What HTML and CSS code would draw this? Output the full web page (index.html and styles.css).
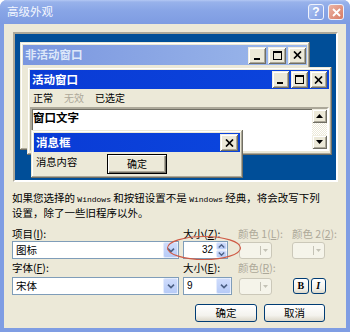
FILE: index.html
```html
<!DOCTYPE html>
<html lang="zh-CN">
<head>
<meta charset="utf-8">
<title>高级外观</title>
<link rel="stylesheet" href="styles.css">
</head>
<body>
<div class="dialog">
  <div class="titlebar">
    <span class="title">高级外观</span>
    <span class="cap help">?</span>
    <span class="cap close"><svg width="9" height="9" viewBox="0 0 9 9"><path d="M1 1L8 8M8 1L1 8" stroke="#fff" stroke-width="1.8"/></svg></span>
  </div>
  <div class="client">
    <div class="preview">
      <div class="win win-inactive">
        <div class="wtitle t-inactive">
          <span class="wname">非活动窗口</span>
          <span class="cb cb-lg"><svg width="9" height="9" viewBox="0 0 9 9"><rect x="1" y="7" width="6" height="2"/></svg></span>
          <span class="cb cb-lg"><svg width="9" height="9" viewBox="0 0 9 9"><path d="M0 0H9V9H0ZM1 2V8H8V2Z" fill-rule="evenodd"/></svg></span>
          <span class="cb cb-lg cb-close"><svg width="9" height="8" viewBox="0 0 9 8"><path d="M1 0.5L8 7.5M8 0.5L1 7.5" stroke="#000" stroke-width="1.7"/></svg></span>
        </div>
      </div>
      <div class="win win-active">
        <div class="wtitle t-active">
          <span class="wname">活动窗口</span>
          <span class="cb"><svg width="9" height="9" viewBox="0 0 9 9"><rect x="1" y="7" width="6" height="2"/></svg></span>
          <span class="cb"><svg width="9" height="9" viewBox="0 0 9 9"><path d="M0 0H9V9H0ZM1 2V8H8V2Z" fill-rule="evenodd"/></svg></span>
          <span class="cb cb-close"><svg width="9" height="8" viewBox="0 0 9 8"><path d="M1 0.5L8 7.5M8 0.5L1 7.5" stroke="#000" stroke-width="1.7"/></svg></span>
        </div>
        <div class="menu">
          <span>正常</span>
          <span class="dis">无效</span>
          <span>已选定</span>
        </div>
        <div class="textbox">
          <span class="wtext">窗口文字</span>
          <div class="vscroll">
            <span class="sb-btn"><svg width="7" height="4" viewBox="0 0 7 4"><path d="M3.5 0L7 4H0Z"/></svg></span>
            <span class="sb-track"></span>
            <span class="sb-btn"><svg width="7" height="4" viewBox="0 0 7 4"><path d="M0 0H7L3.5 4Z"/></svg></span>
          </div>
        </div>
      </div>
      <div class="win win-msg">
        <div class="wtitle t-active t-msg">
          <span class="wname">消息框</span>
          <span class="cb cb-lg"><svg width="9" height="8" viewBox="0 0 9 8"><path d="M1 0.5L8 7.5M8 0.5L1 7.5" stroke="#000" stroke-width="1.7"/></svg></span>
        </div>
        <div class="msgbody">
          <span class="msgtext">消息内容</span>
          <span class="okbtn">确定</span>
        </div>
      </div>
    </div>

    <p class="desc">如果您选择的 <span class="lat">Windows</span> 和按钮设置不是 <span class="lat">Windows</span> 经典，将会改写下列<br>设置，除了一些旧程序以外。</p>

    <div class="form">
      <span class="lbl">项目(<u>I</u>):</span>
      <span class="lbl">大小(<u>Z</u>):</span>
      <span class="lbl off">颜色 1(<u>L</u>):</span>
      <span class="lbl off">颜色 2(<u>2</u>):</span>

      <div class="combo combo-wide">
        <span class="val">图标</span>
        <span class="drop"><svg width="8" height="5" viewBox="0 0 8 5"><path d="M1 0.6L4 3.6L7 0.6" fill="none" stroke="#4d6185" stroke-width="1.6"/></svg></span>
      </div>
      <div class="spin">
        <span class="num">32</span>
        <span class="arrows">
          <span class="arr"><svg width="7" height="4" viewBox="0 0 7 4"><path d="M0.8 3.4L3.5 0.8L6.2 3.4" fill="none" stroke="#4d6185" stroke-width="1.4"/></svg></span>
          <span class="arr"><svg width="7" height="4" viewBox="0 0 7 4"><path d="M0.8 0.6L3.5 3.2L6.2 0.6" fill="none" stroke="#4d6185" stroke-width="1.4"/></svg></span>
        </span>
      </div>
      <div class="colorbtn"><span class="sep"></span><svg width="5" height="3" viewBox="0 0 5 3"><path d="M0 0H5L2.5 3Z" fill="#c4c2b6"/></svg></div>
      <div class="colorbtn colorbtn-2"><span class="sep"></span><svg width="5" height="3" viewBox="0 0 5 3"><path d="M0 0H5L2.5 3Z" fill="#c4c2b6"/></svg></div>

      <span class="lbl">字体(<u>F</u>):</span>
      <span class="lbl">大小(<u>E</u>):</span>
      <span class="lbl off">颜色(<u>R</u>):</span>
      <span></span>

      <div class="combo combo-wide">
        <span class="val">宋体</span>
        <span class="drop"><svg width="8" height="5" viewBox="0 0 8 5"><path d="M1 0.6L4 3.6L7 0.6" fill="none" stroke="#4d6185" stroke-width="1.6"/></svg></span>
      </div>
      <div class="combo combo-size">
        <span class="val num-l">9</span>
        <span class="drop"><svg width="8" height="5" viewBox="0 0 8 5"><path d="M1 0.6L4 3.6L7 0.6" fill="none" stroke="#4d6185" stroke-width="1.6"/></svg></span>
      </div>
      <div class="colorbtn colorbtn-r2"><span class="sep"></span><svg width="5" height="3" viewBox="0 0 5 3"><path d="M0 0H5L2.5 3Z" fill="#c4c2b6"/></svg></div>
      <div class="styles">
        <span class="sbtn bold">B</span>
        <span class="sbtn ital">I</span>
      </div>

      <svg class="ring" width="76" height="26" viewBox="0 0 76 26"><ellipse cx="38" cy="13" rx="36.5" ry="11.5" fill="none" stroke="#cf5a45" stroke-width="1.1"/></svg>
    </div>

    <div class="actions">
      <span class="btn">确定</span>
      <span class="btn btn-2">取消</span>
    </div>
  </div>
</div>
</body>
</html>
```

FILE: styles.css
```css
* { box-sizing: border-box; margin: 0; padding: 0; }
html, body { width: 350px; height: 332px; overflow: hidden; background: #fff; }
body { font-family: "Noto Sans CJK SC", "Noto Sans", sans-serif; font-size: 10.5px; color: #000; line-height: 1; }
u { text-decoration: underline; text-underline-offset: 1px; }

.dialog { width: 350px; height: 332px; display: flex; flex-direction: column; background: #7f9de3; border-radius: 7px 7px 0 0; overflow: hidden; }
.titlebar { height: 24px; flex: none; display: flex; align-items: center; padding: 0 6px 0 7px; background: linear-gradient(#b3c8f4 0, #98b2eb 2px, #88a5e6 45%, #7e9ce2 100%); }
.title { flex: 1; color: #f4f7fe; font-size: 11.5px; }
.cap { width: 16px; height: 16px; border: 1px solid #eef2fc; border-radius: 3px; display: flex; align-items: center; justify-content: center; color: #fff; font: bold 12px "Liberation Sans", sans-serif; }
.help { background: linear-gradient(135deg, #aec3f1, #7d9be2); margin-right: 4px; }
.close { background: linear-gradient(135deg, #ecb4a5, #d77a63); }

.client { flex: 1; margin: 0 4px 4px; background: #ece9d8; display: flex; flex-direction: column; padding-top: 8px; }

.preview { position: relative; flex: none; margin-left: 9px; width: 325px; height: 150px; background: #004e98; border: 2px solid; border-color: #aca899 #fff #fff #aca899; overflow: hidden; }

.win { position: absolute; display: flex; flex-direction: column; padding: 3px; background: #ece9d8; box-shadow: inset -1px -1px #716f64, inset 1px 1px #ece9d8, inset -2px -2px #aca899, inset 2px 2px #fff; }
.win-inactive { left: 5px; top: 8px; width: 290px; height: 108px; }
.win-active { left: 12px; top: 33px; width: 305px; height: 88px; }
.win-msg { left: 16px; top: 96px; width: 212px; height: 48px; }

.wtitle { flex: none; display: flex; align-items: center; gap: 2px; padding: 0 2px 0 2px; }
.t-inactive { height: 20px; padding-right: 1px; background: linear-gradient(90deg, #7a96df, #9db9eb); color: #dde7f9; }
.t-active { height: 19px; background: linear-gradient(90deg, #0a3bd5, #0b45dd); color: #fff; }
.wname { flex: 1; font-weight: 700; font-size: 11.5px; }

.cb { width: 17px; height: 17px; flex: none; display: flex; align-items: center; justify-content: center; background: #ece9d8; box-shadow: inset 1px 1px #f1efe2, inset -1px -1px #716f64, inset 2px 2px #fff, inset -2px -2px #aca899; }
.cb-lg { width: 18px; height: 17px; }

.menu { flex: none; height: 18px; display: flex; align-items: center; gap: 11px; padding-left: 3px; font-size: 10px; }
.dis { color: #aca899; }

.textbox { flex: none; height: 44px; display: flex; background: #fff; border: 2px solid; border-color: #aca899 #fff #fff #aca899; box-shadow: inset 1px 1px #716f64; }
.wtext { flex: 1; font-weight: 700; font-size: 11.5px; padding: 3px 0 0 1px; }
.vscroll { width: 15px; display: flex; flex-direction: column; }
.sb-btn { height: 14px; flex: none; display: flex; align-items: center; justify-content: center; background: #ece9d8; box-shadow: inset 1px 1px #f1efe2, inset -1px -1px #716f64, inset 2px 2px #fff, inset -2px -2px #aca899; }
.sb-track { flex: 1; background: repeating-conic-gradient(#fff 0 25%, #ece9d8 0 50%) 0 0 / 2px 2px; }

.msgbody { flex: 1; display: flex; align-items: center; padding-left: 2px; }
.msgtext { width: 71px; font-size: 10.3px; margin-top: -3px; }
.okbtn { width: 60px; height: 20px; display: flex; align-items: center; justify-content: center; font-size: 10px; background: #ece9d8; border: 1px solid #000; box-shadow: inset 1px 1px #fff, inset -1px -1px #716f64, inset -2px -2px #aca899; }

.desc { margin: 9px 0 0 8px; line-height: 13px; white-space: nowrap; font-size: 10.5px; }
.lat { font-family: "Liberation Mono", monospace; font-size: 8px; }

.form { position: relative; margin: 8px 0 0 8px; display: grid; grid-template-columns: 171px 55px 54px 34px; grid-template-rows: 14px 18px 18px 18px; align-items: center; }
.lbl { white-space: nowrap; font-size: 10.5px; }
.off { color: #aca899; }

.combo { height: 18px; display: flex; align-items: center; background: #fff; border: 1px solid #7f9db9; }
.combo-wide { width: 167px; }
.combo-size { width: 49px; }
.val { flex: 1; padding-left: 3px; font-size: 10.5px; }
.num-l { font-family: "Liberation Sans", sans-serif; font-size: 10px; }
.drop { width: 15px; height: 16px; display: flex; align-items: center; justify-content: center; background: linear-gradient(#cfdcfc, #b7cbf7); border: 1px solid #e4ecfd; border-radius: 2px; }

.spin { width: 45px; height: 18px; display: flex; align-items: center; background: #fff; border: 1px solid #7f9db9; }
.num { flex: 1; text-align: right; padding-right: 3px; font-family: "Liberation Sans", sans-serif; font-size: 10px; }
.arrows { width: 11px; height: 16px; display: flex; flex-direction: column; gap: 0; }
.arr { flex: 1; display: flex; align-items: center; justify-content: center; background: linear-gradient(#cfdcfc, #b7cbf7); border: 1px solid #e4ecfd; border-radius: 2px; }

.colorbtn { width: 33px; height: 17px; margin-left: 1px; display: flex; align-items: center; justify-content: flex-end; gap: 2px; padding-right: 3px; background: #f5f4ea; border: 1px solid #cbc8b9; border-radius: 3px; }
.colorbtn-2 { margin-left: 0; }
.sep { width: 1px; height: 9px; background: #c4c2b6; }

.styles { display: flex; gap: 2px; padding-left: 1px; }
.sbtn { width: 16px; height: 16px; display: flex; align-items: center; justify-content: center; border: 1px solid #003c74; border-radius: 3px; background: linear-gradient(#fff, #f2f1ea 70%, #dcd8c9); font-family: "Liberation Serif", serif; font-size: 10px; font-weight: 700; }
.ital { font-style: italic; }

.ring { position: absolute; left: 154px; top: 8px; }

.actions { display: flex; justify-content: flex-end; gap: 7px; margin-top: 9px; padding-right: 21px; }
.btn { width: 62px; height: 18px; display: flex; align-items: center; justify-content: center; font-size: 10.5px; border: 1px solid #003c74; border-radius: 3px; background: linear-gradient(#fff, #f4f3ee 65%, #dcd7c9); }
.btn-2 { width: 61px; }
```
